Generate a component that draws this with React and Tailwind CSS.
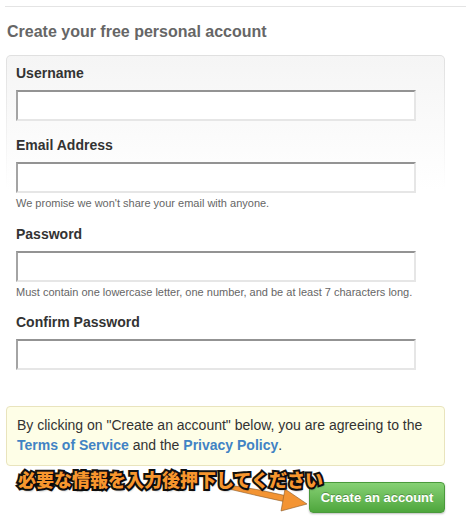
export default function App() {
  const font = "font-['Liberation_Sans','Helvetica',Arial,sans-serif]";
  const inputCls =
    "block w-[400px] h-[31px] bg-white border-2 border-t-[#939393] border-l-[#a4a4a4] border-r-[#e6e6e6] border-b-[#e6e6e6] outline-none";
  const labelCls = "block text-[14px] leading-[17px] font-bold text-[#333]";
  const helpCls = "text-[11px] leading-[14px] text-[#666] mt-[3px]";
  return (
    <div className={`relative w-[466px] h-[526px] bg-white overflow-hidden ${font}`}>
      <div className="pt-[6px] pl-[5px]">
        <div className="h-px bg-[#e4e4e4]" />
      </div>
      <div className="pl-[7px] mt-[15px] text-[16px] leading-[20px] font-bold text-[#666]">
        Create your free personal account
      </div>
      <div className="ml-[6px] mt-[13px] w-[439px] rounded-[5px] p-px bg-linear-to-b from-[#e0e0e0] to-white to-[40%]">
        <div className="rounded-[4px] bg-linear-to-b from-[#f5f5f5] to-white to-[40%] pl-[9px] pt-[9px] pb-[20px]">
          <label className={labelCls}>Username</label>
          <input className={`${inputCls} mt-[8px]`} />

          <label className={`${labelCls} mt-[16px]`}>Email Address</label>
          <input className={`${inputCls} mt-[8px]`} />
          <div className={helpCls}>We promise we won't share your email with anyone.</div>

          <label className={`${labelCls} mt-[16px]`}>Password</label>
          <input type="password" className={`${inputCls} mt-[8px]`} />
          <div className={helpCls}>
            Must contain one lowercase letter, one number, and be at least 7 characters long.
          </div>

          <label className={`${labelCls} mt-[15px]`}>Confirm Password</label>
          <input type="password" className={`${inputCls} mt-[8px]`} />
        </div>
      </div>

      <div className="ml-[6px] mt-[15px] w-[439px] rounded-[4px] border border-[#e9e4bd] bg-[#fefee7] px-[10px] pt-[8px] pb-[10px] text-[14px] leading-[20px] text-[#333]">
        By clicking on "Create an account" below, you are agreeing to the{" "}
        <span className="font-bold text-[#4183c4]">Terms of Service</span> and the{" "}
        <span className="font-bold text-[#4183c4]">Privacy Policy</span>.
      </div>

      <div className="flex justify-end w-[445px] mt-[16px]">
        <button className="w-[136px] h-[31px] rounded-[4px] border border-[#4a9a3b] bg-linear-to-b from-[#86d174] to-[#4ea63c] text-white text-[13px] font-bold [text-shadow:0_-1px_0_rgba(0,0,0,0.25)] shadow-[0_1px_2px_rgba(0,0,0,0.25)]">
          Create an account
        </button>
      </div>

      <svg
        className="absolute left-[220px] top-[480px]"
        width="100"
        height="35"
        viewBox="220 480 100 35"
      >
        <path
          d="M232,485.5 Q258,489 285,495.5 L286,502 Q258,496 231,489.5 Z"
          fill="#f39433"
          stroke="#8a5a2a"
          strokeWidth="0.6"
        />
        <path d="M285,489 L307,504 L281,511 Z" fill="#f39433" stroke="#8a5a2a" strokeWidth="0.6" />
      </svg>

      <div className="absolute left-[18px] top-[469px] text-[18px] leading-[20px] font-black text-[#f7962e] font-['Noto_Sans_CJK_JP',sans-serif] [-webkit-text-stroke:4px_#111] [paint-order:stroke_fill] [text-shadow:1px_2px_2px_rgba(0,0,0,0.5)] whitespace-nowrap">
        必要な情報を入力後押下してください
      </div>
    </div>
  );
}
